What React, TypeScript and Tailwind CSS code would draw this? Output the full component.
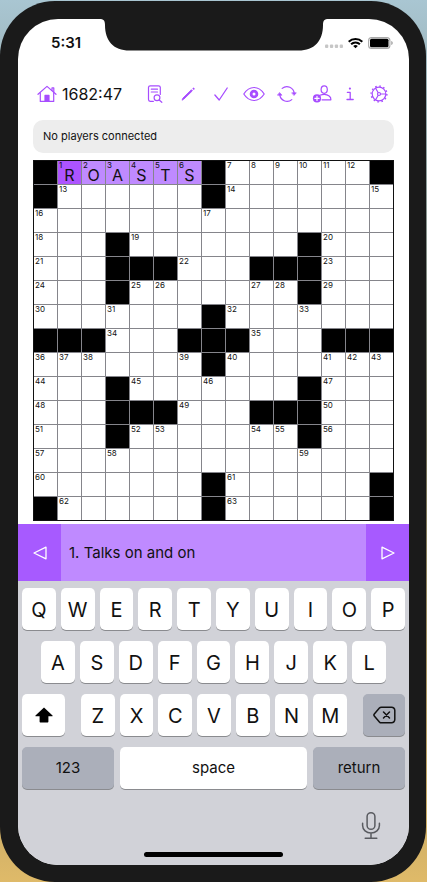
import React, { useState } from "react";

const PATTERN = [
  "#ROASTS#......#",
  "#......#.......",
  "...............",
  "...#.......#...",
  "...###...###...",
  "...#.......#...",
  ".......#.......",
  "###...###...###",
  ".......#.......",
  "...#.......#...",
  "...###...###...",
  "...#.......#...",
  "...............",
  ".......#......#",
  "#......#......#",
];

const NUMBERS = [
  [0, 1, 2, 3, 4, 5, 6, 0, 7, 8, 9, 10, 11, 12, 0],
  [0, 13, 0, 0, 0, 0, 0, 0, 14, 0, 0, 0, 0, 0, 15],
  [16, 0, 0, 0, 0, 0, 0, 17, 0, 0, 0, 0, 0, 0, 0],
  [18, 0, 0, 0, 19, 0, 0, 0, 0, 0, 0, 0, 20, 0, 0],
  [21, 0, 0, 0, 0, 0, 22, 0, 0, 0, 0, 0, 23, 0, 0],
  [24, 0, 0, 0, 25, 26, 0, 0, 0, 27, 28, 0, 29, 0, 0],
  [30, 0, 0, 31, 0, 0, 0, 0, 32, 0, 0, 33, 0, 0, 0],
  [0, 0, 0, 34, 0, 0, 0, 0, 0, 35, 0, 0, 0, 0, 0],
  [36, 37, 38, 0, 0, 0, 39, 0, 40, 0, 0, 0, 41, 42, 43],
  [44, 0, 0, 0, 45, 0, 0, 46, 0, 0, 0, 0, 47, 0, 0],
  [48, 0, 0, 0, 0, 0, 49, 0, 0, 0, 0, 0, 50, 0, 0],
  [51, 0, 0, 0, 52, 53, 0, 0, 0, 54, 55, 0, 56, 0, 0],
  [57, 0, 0, 58, 0, 0, 0, 0, 0, 0, 0, 59, 0, 0, 0],
  [60, 0, 0, 0, 0, 0, 0, 0, 61, 0, 0, 0, 0, 0, 0],
  [0, 62, 0, 0, 0, 0, 0, 0, 63, 0, 0, 0, 0, 0, 0],
];

function Icon({ w, h, children }: { w: number; h: number; children: React.ReactNode }) {
  return (
    <svg
      width={w}
      height={h}
      viewBox={`0 0 ${w} ${h}`}
      fill="none"
      stroke="currentColor"
      strokeWidth="1.2"
      strokeLinecap="round"
      strokeLinejoin="round"
      aria-hidden="true"
      className="shrink-0"
    >
      {children}
    </svg>
  );
}

function HomeIcon() {
  return (
    <Icon w={20} h={18}>
      <path d="M1 9.3 10 1.4l9 7.9" />
      <path d="M3.3 7.8V16.4h13.4V7.8M15 5.4V2.9h1.8v4.3" />
      <path d="M8 16.4V10.4h4v6z" fill="currentColor" />
    </Icon>
  );
}

function DocSearchIcon() {
  return (
    <Icon w={16} h={18}>
      <path d="M6.4 16.3H3.2A1.7 1.7 0 0 1 1.5 14.6V2.4A1.7 1.7 0 0 1 3.2.8h8.4a1.7 1.7 0 0 1 1.7 1.6v7" />
      <path d="M4.3 4.2h6.2M4.3 7h6.2" />
      <circle cx="10" cy="12.8" r="2.9" />
      <path d="m12.2 15 2.6 2.3" />
    </Icon>
  );
}

function PencilIcon() {
  return (
    <Icon w={14} h={14}>
      <path d="M1.2 12.8 2 11 10.4 2.8l1 1-8.5 8.3z" fill="currentColor" strokeWidth=".9" />
      <path d="m12.5 1.6.2.2" strokeWidth="1.9" />
    </Icon>
  );
}

function CheckIcon() {
  return (
    <Icon w={14} h={14}>
      <path d="m.9 8 4.3 5L13.2 1" strokeWidth="1.3" />
    </Icon>
  );
}

function EyeIcon() {
  return (
    <Icon w={22} h={16}>
      <path d="M.8 8C3.6 3.6 7 1.5 11 1.5S18.4 3.6 21.2 8C18.4 12.4 15 14.5 11 14.5S3.6 12.4.8 8z" />
      <circle cx="11" cy="8" r="2.9" strokeWidth="2.8" />
    </Icon>
  );
}

function RefreshIcon() {
  return (
    <Icon w={20} h={18}>
      <path d="M5.2 3.4a7.3 7.3 0 0 1 12 5.2M14.800 14.6A7.3 7.3 0 0 1 2.8 9.4" />
      <path d="M15 7.800h4.300l-2.100 2.500zM.7 10.200H5L2.800 7.700z" fill="currentColor" strokeWidth=".6" />
    </Icon>
  );
}

function AddPersonIcon() {
  return (
    <Icon w={20} h={18}>
      <ellipse cx="12.2" cy="4.600" rx="3.100" ry="3.700" />
      <path d="M7.800 10.300c3-1.200 7-1.200 9.400.7 1.200.9 1.800 2.200 1.700 3.800H10" />
      <circle cx="5" cy="13.400" r="4.100" fill="currentColor" stroke="none" />
      <path d="M5 11.300v4.200M2.900 13.400h4.200" stroke="#fff" />
    </Icon>
  );
}

function InfoIcon() {
  return (
    <Icon w={8} h={14}>
      <circle cx="3.9" cy="1.600" r="1.100" fill="currentColor" stroke="none" />
      <path d="M1.400 5.400h2.800v7M1 12.500h6.200" strokeWidth="1.300" />
    </Icon>
  );
}

function GearIcon() {
  return (
    <Icon w={18} h={18}>
      <circle cx="9" cy="9" r="6.800" />
      <circle cx="9" cy="9" r="7.900" strokeWidth="1.400" strokeDasharray="1.600 2.536" strokeLinecap="butt" />
      <circle cx="9" cy="9" r="1.500" />
      <path d="M10.700 9h5M8.100 7.500 5.600 3.300M8.100 10.500l-2.500 4.200" />
    </Icon>
  );
}

const TOOLS = [
  { label: "Clue list", width: "w-[33px]", icon: <DocSearchIcon /> },
  { label: "Pencil", width: "w-[33px]", icon: <PencilIcon /> },
  { label: "Check", width: "w-[33px]", icon: <CheckIcon /> },
  { label: "Reveal", width: "w-[33px]", icon: <EyeIcon /> },
  { label: "Sync", width: "w-[33px]", icon: <RefreshIcon /> },
  { label: "Invite player", width: "w-[38px]", icon: <AddPersonIcon /> },
  { label: "Info", width: "w-[18px]", icon: <InfoIcon /> },
  { label: "Settings", width: "w-[40px]", icon: <GearIcon /> },
];

function StatusBar() {
  return (
    <div className="relative flex h-5 items-center justify-between pr-4 pl-[33px]">
      <span className="text-[15px] leading-5 font-semibold">5:31</span>
      <div className="flex items-center gap-[5px]">
        <svg width="18" height="12" viewBox="0 0 18 12" fill="#c6c6c6" aria-hidden="true">
          <rect x="0" y="7.500" width="3.300" height="3.500" rx="1" />
          <rect x="4.900" y="7.500" width="3.300" height="3.500" rx="1" />
          <rect x="9.800" y="7.500" width="3.300" height="3.500" rx="1" />
          <rect x="14.700" y="7.500" width="3.300" height="3.500" rx="1" />
        </svg>
        <svg width="15" height="12" viewBox="0 0 15 12" fill="none" stroke="#000" strokeWidth="2" aria-hidden="true">
          <path d="M.7 4.700a9.700 9.700 0 0 1 13.600 0M3.100 7.200a6.300 6.300 0 0 1 8.800 0" />
          <path d="M7.500 11.300 5.200 9.100a3.300 3.300 0 0 1 4.600 0z" fill="#000" stroke="none" />
        </svg>
        <svg width="25" height="12" viewBox="0 0 25 12" aria-hidden="true">
          <rect x=".6" y=".6" width="21.300" height="10.800" rx="3" fill="none" stroke="#a9a9a9" strokeWidth="1.100" />
          <rect x="2" y="1.700" width="18.500" height="8.600" rx="1.500" />
          <path d="M23.200 4v4c1-.4 1.600-1.100 1.600-2s-.6-1.600-1.600-2z" fill="#a9a9a9" />
        </svg>
      </div>
    </div>
  );
}

function Grid() {
  return (
    <div className="mx-[15px] mt-[7px] grid grid-cols-[repeat(15,minmax(0,1fr))] gap-px border border-[#111] bg-[#85858b]">
      {PATTERN.flatMap((row, r) =>
        row.split("").map((ch, c) => {
          const key = `${r}-${c}`;
          if (ch === "#") return <div key={key} className="aspect-square bg-black" />;
          const letter = ch === "." ? "" : ch;
          const color = !letter ? "bg-white" : c === 1 ? "bg-[#ad54ff]" : "bg-[#bf8aff]";
          const number = NUMBERS[r][c];
          return (
            <button
              key={key}
              aria-label={`Row ${r + 1}, column ${c + 1}`}
              className={`relative flex aspect-square items-end justify-center ${color}`}
            >
              {number > 0 && (
                <span className="absolute top-0 left-px text-[8px] leading-[9px]">{number}</span>
              )}
              {letter && <span className="text-[16px] leading-[18px]">{letter}</span>}
            </button>
          );
        })
      )}
    </div>
  );
}

const KEY = "flex h-[42px] items-center justify-center rounded-[5px] shadow-[0_1px_0_#8a8b8f]";

function LetterKeys({ letters }: { letters: string }) {
  return (
    <>
      {letters.split("").map((l) => (
        <button key={l} className={`${KEY} min-w-0 flex-1 bg-white pt-0.5 text-[20px]`}>
          {l}
        </button>
      ))}
    </>
  );
}

function Keyboard() {
  return (
    <div className="bg-[#d1d2d8] px-1 pt-[7px] pb-2">
      <div className="flex flex-col gap-[11px]">
        <div className="flex gap-[5px]">
          <LetterKeys letters="QWERTYUIOP" />
        </div>
        <div className="flex gap-[5px] px-[19px]">
          <LetterKeys letters="ASDFGHJKL" />
        </div>
        <div className="flex gap-4">
          <button aria-label="Shift" className={`${KEY} w-[43px] bg-white`}>
            <svg width="18" height="16" viewBox="0 0 18 16" aria-hidden="true">
              <path d="M9 .4 17.500 8.600c.3.3.1.7-.3.700H13.400v5.200c0 .7-.4 1.100-1.100 1.100H5.700c-.7 0-1.100-.4-1.100-1.100V9.300H.8c-.4 0-.6-.4-.3-.7z" />
            </svg>
          </button>
          <div className="flex min-w-0 flex-1 gap-[5px]">
            <LetterKeys letters="ZXCVBNM" />
          </div>
          <button aria-label="Delete" className={`${KEY} w-[42px] bg-[#abafba]`}>
            <svg width="23" height="18" viewBox="0 0 23 18" fill="none" stroke="#111" strokeWidth="1.500" strokeLinecap="round" strokeLinejoin="round" aria-hidden="true">
              <path d="M8.400 1.200h10.200A3.200 3.200 0 0 1 21.800 4.400v9.200a3.200 3.200 0 0 1-3.200 3.200H8.400c-.8 0-1.500-.3-2-.9L1.300 10c-.5-.6-.5-1.400 0-2l5.100-5.900c.5-.6 1.200-.9 2-.9z" />
              <path d="m10.500 6 6 6M16.500 6l-6 6" />
            </svg>
          </button>
        </div>
        <div className="flex gap-[6px] text-[15px]">
          <button className={`${KEY} w-[92px] bg-[#abafba]`}>123</button>
          <button className={`${KEY} min-w-0 flex-1 bg-white`}>space</button>
          <button className={`${KEY} w-[92px] bg-[#abafba]`}>return</button>
        </div>
      </div>
      <div className="mt-[22px] flex justify-end pr-6">
        <button aria-label="Dictate">
          <svg className="block" width="20" height="29" viewBox="0 0 20 29" fill="none" stroke="#595b60" strokeWidth="1.500" strokeLinecap="round" aria-hidden="true">
            <rect x="6.100" y="1.700" width="7.800" height="16.600" rx="3.900" />
            <path d="M1.600 12.300v2.200a8.400 7.600 0 0 0 16.800 0v-2.200M10 22.200v5M4.200 27.300h11.600" />
          </svg>
        </button>
      </div>
      <div className="mx-auto mt-3 h-[5px] w-[139px] rounded-full bg-black" />
    </div>
  );
}

export default function App() {
  const [clue] = useState("1. Talks on and on");
  return (
    <div className="bg-linear-to-b from-[#a9c6d2] via-[#6b6a55] to-[#dfba69] pt-px pr-px font-[Inter,'Liberation_Sans',sans-serif] text-[#111]">
      <div className="rounded-[55px] bg-[#1a1a1a] pt-[18px] pr-[17px] pb-[17px] pl-[18px]">
        <main className="relative overflow-hidden rounded-[40px] bg-white pt-[14px]">
          <svg className="absolute top-0 left-1/2 -translate-x-1/2" width="229" height="32" viewBox="0 0 229 32" fill="#1a1a1a" aria-hidden="true">
            <path d="M0 0C4 0 5.500 1.500 5.500 6 5.500 22 14 31.500 30 31.500H199C215 31.500 223.500 22 223.500 6 223.500 1.500 225 0 229 0z" />
          </svg>
          <StatusBar />

          <header className="mt-[27px] flex h-7 items-center justify-between pr-[10px] pl-[19px]">
            <div className="flex items-center gap-[5px]">
              <button aria-label="Home" className="text-[#a74dff]">
                <HomeIcon />
              </button>
              <time className="text-[16px] leading-7">1682:47</time>
            </div>
            <nav className="flex text-[#a74dff]">
              {TOOLS.map((t) => (
                <button key={t.label} aria-label={t.label} className={`flex h-7 items-center justify-center ${t.width}`}>
                  {t.icon}
                </button>
              ))}
            </nav>
          </header>

          <p className="mx-[15px] mt-3 rounded-[10px] bg-[#ededed] px-[10px] text-[11px] leading-[33px]">
            No players connected
          </p>

          <Grid />

          <div className="mt-[3px] flex h-[57px] bg-[#bf8aff]">
            <button aria-label="Previous clue" className="flex w-[43px] items-center justify-center bg-[#a75aff]">
              <svg width="14" height="14" viewBox="0 0 14 14" fill="none" stroke="#fff" strokeWidth="1.300" strokeLinejoin="round" aria-hidden="true">
                <path d="M13 1.200v11.600L1 7z" />
              </svg>
            </button>
            <p className="min-w-0 flex-1 px-2 text-[15px] leading-[57px]">{clue}</p>
            <button aria-label="Next clue" className="flex w-[43px] items-center justify-center bg-[#a75aff]">
              <svg width="14" height="14" viewBox="0 0 14 14" fill="none" stroke="#fff" strokeWidth="1.300" strokeLinejoin="round" aria-hidden="true">
                <path d="M1 1.200v11.600L13 7z" />
              </svg>
            </button>
          </div>

          <Keyboard />
        </main>
      </div>
    </div>
  );
}
